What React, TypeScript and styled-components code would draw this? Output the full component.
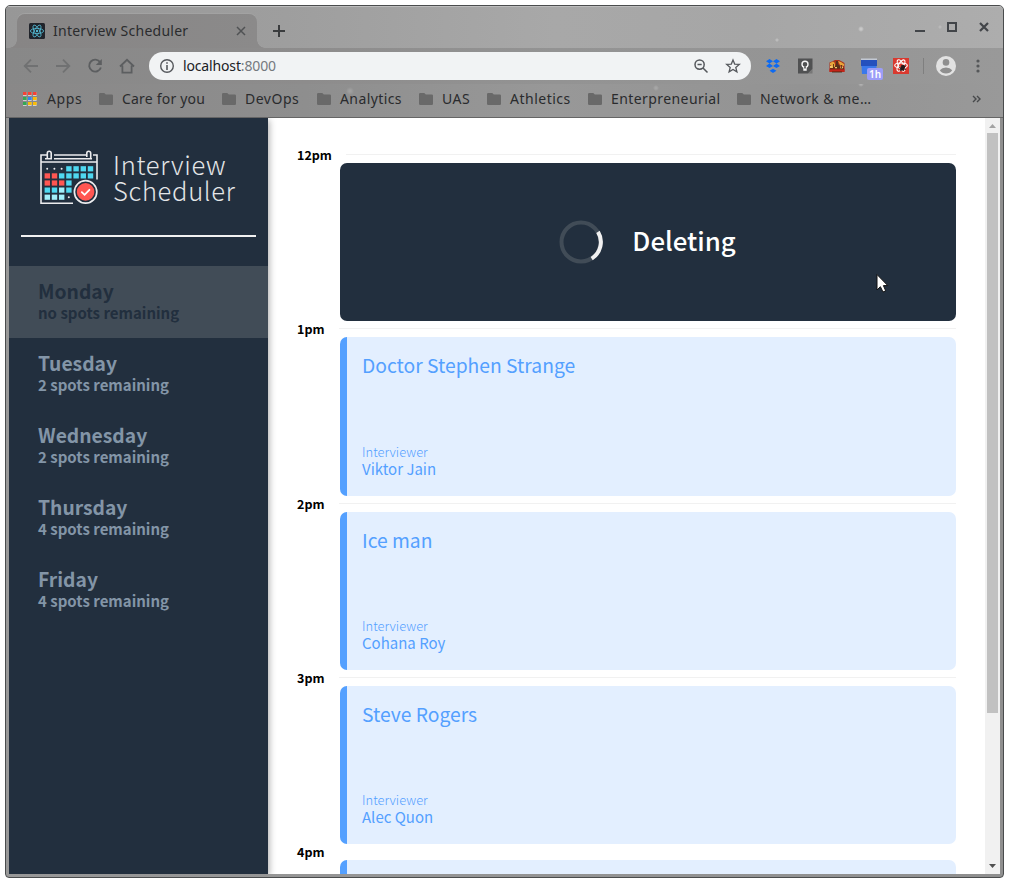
import React from "react";
import styled, { createGlobalStyle } from "styled-components";

const Global = createGlobalStyle`
  * { box-sizing: border-box; }
  html, body { margin: 0; background: #fff; overflow: hidden; }
  h1, h2, h3, p, ul { margin: 0; padding: 0; list-style: none; font-weight: inherit; }
  svg { display: block; flex: none; }
`;

const ui = `"Noto Sans", "Open Sans", sans-serif`;
const site = `"Noto Sans CJK SC", "Noto Sans", sans-serif`;

const Desktop = styled.div`
  width: 1013px;
  height: 887px;
  padding: 5px 0 0 5px;
  background: #fff;
`;

const Window = styled.div`
  position: relative;
  display: flex;
  flex-direction: column;
  width: 999px;
  height: 873px;
  padding: 0 3px 3px;
  border: 1px solid #4a4c4d;
  border-radius: 5px 5px 4px 4px;
  background: linear-gradient(90deg, #989898, #8f8f8f);
  overflow: hidden;
`;

const TabStrip = styled.header`
  display: flex;
  align-items: flex-end;
  flex: none;
  height: 42px;
  margin: 0 -3px;
  padding: 0 0 0 11px;
  border-top: 1px solid #bdbdbd;
  background:
    radial-gradient(circle at 855px 22px, #c8c8c8 0 1px, transparent 3px),
    radial-gradient(circle at 771px 33px, #bcbcbc 0 1px, transparent 2px),
    radial-gradient(circle at 934px 20px, #b9b9b9 0 1px, transparent 2px),
    linear-gradient(90deg, #979797 0, #9e9e9e 28%, #a8a8a8 55%, #a6a6a6 75%, #adadad 100%);
`;

const Tab = styled.div`
  position: relative;
  display: flex;
  align-items: center;
  width: 240px;
  height: 34px;
  padding: 0 10px 0 12px;
  border-radius: 8px 8px 0 0;
  background: linear-gradient(90deg, #878585, #8b8a8a);
  box-shadow: 0 -1px 0 #a2a2a2;
  &::before, &::after {
    content: "";
    position: absolute;
    bottom: 0;
    width: 8px;
    height: 8px;
  }
  &::before { left: -8px; background: radial-gradient(circle at 0 0, transparent 7.5px, #878585 8px); }
  &::after { right: -8px; background: radial-gradient(circle at 100% 0, transparent 7.5px, #8b8a8a 8px); }
`;

const TabTitle = styled.span`
  flex: 1;
  margin-left: 8px;
  font: 14px/20px ${ui};
  letter-spacing: 0.25px;
  color: #2b2c2e;
  white-space: nowrap;
`;

const NewTab = styled.div`
  width: 12px;
  margin: 0 0 11px 16px;
`;

const WindowButtons = styled.div`
  display: flex;
  gap: 20px;
  margin: 0 13px 15px auto;
`;

const Toolbar = styled.div`
  display: flex;
  align-items: center;
  flex: none;
  height: 36px;
  margin: 0 -3px;
  padding-left: 17px;
  background: linear-gradient(90deg, #888 0, #8d8c8c 30%, #939393 55%, #959595 80%, #999 100%);
`;

const NavIcons = styled.div`
  display: flex;
  align-items: center;
  gap: 16px;
  width: 126px;
`;

const AddressBar = styled.div`
  display: flex;
  align-items: center;
  width: 602px;
  height: 28px;
  padding: 0 10px;
  border-radius: 14px;
  background: #f1f3f4;
`;

const Url = styled.span`
  flex: 1;
  margin-left: 8px;
  font: 14px/20px ${ui};
  letter-spacing: -0.15px;
  color: #202124;
`;

const Port = styled.span`
  color: #75797e;
`;

const AddressActions = styled.div`
  display: flex;
  gap: 16px;
`;

const Extensions = styled.div`
  display: flex;
  align-items: center;
  gap: 16px;
  margin-left: 14px;
`;

const CalendarExtension = styled.div`
  position: relative;
  width: 16px;
  height: 16px;
`;

const Badge = styled.span`
  position: absolute;
  left: 6px;
  top: 10px;
  width: 16px;
  height: 12px;
  border-radius: 2px;
  background: #9c9df8;
  color: #fff;
  font: 600 10px/12px "Noto Sans", sans-serif;
  text-align: center;
`;

const Divider = styled.span`
  width: 1px;
  height: 16px;
  margin-left: -2px;
  background: #7f7f7f;
`;

const Bookmarks = styled.nav`
  display: flex;
  align-items: center;
  flex: none;
  height: 34px;
  margin: 0 -3px;
  padding: 0 22px 4px 17px;
  border-bottom: 1px solid #656565;
  background:
    radial-gradient(circle at 344px 7px, #a0a0a0 0 1px, transparent 4px),
    radial-gradient(circle at 650px 4px, #a6a6a6 0 1px, transparent 3px),
    radial-gradient(circle at 855px 0, #b0b0b0 0 1px, transparent 3px),
    linear-gradient(90deg, #898888 0, #8e8e8e 30%, #989898 55%, #939393 80%, #999 100%);
`;

const Bookmark = styled.div<{ $width: number; $spacing?: number }>`
  display: flex;
  align-items: center;
  flex: none;
  gap: 9px;
  width: ${(p) => p.$width}px;
  font: 14px/20px ${ui};
  letter-spacing: ${(p) => p.$spacing ?? 0}px;
  color: #2a2b2d;
  white-space: nowrap;
`;

const AppsBookmark = styled(Bookmark)`
  gap: 10px;
`;

const Overflow = styled.div`
  margin-left: auto;
`;

const Page = styled.main`
  display: flex;
  flex: 1;
  min-height: 0;
  background: #fff;
`;

const Sidebar = styled.aside`
  position: relative;
  width: 259px;
  flex: none;
  background: #222f3e;
  box-shadow: 1px 2px 7px rgba(0, 0, 0, 0.35);
  clip-path: inset(0 -12px 0 0);
  font-family: ${site};
`;

const Brand = styled.div`
  display: flex;
  gap: 14px;
  height: 117px;
  padding: 32px 0 0 31px;
`;

const BrandName = styled.h1`
  padding-top: 1px;
  font-size: 25.5px;
  line-height: 26px;
  font-weight: 300;
  letter-spacing: 0.7px;
  color: #e4e6e8;
`;

const Rule = styled.div`
  height: 2px;
  margin: 0 12px 29px;
  background: #f1f1f1;
`;

const Day = styled.li<{ $selected?: boolean }>`
  height: 72px;
  padding: 15px 29px 0;
  background: ${(p) => (p.$selected ? "#414c57" : "transparent")};
  color: ${(p) => (p.$selected ? "#222f3e" : "#8395a7")};
  font-weight: 700;
`;

const DayName = styled.h2`
  font-size: 19.3px;
  line-height: 21px;
  font-weight: 700;
`;

const Spots = styled.p`
  margin-top: 1px;
  font-size: 15px;
  line-height: 20px;
`;

const Schedule = styled.section`
  flex: 1;
  padding: 29px 29px 0 29px;
  overflow: hidden;
  font-family: ${site};
`;

const Hour = styled.header`
  display: flex;
  justify-content: space-between;
  height: 16px;
`;

const Time = styled.h3`
  font-size: 12.5px;
  line-height: 15px;
  font-weight: 700;
  color: #000;
`;

const HourLine = styled.div<{ $width: number }>`
  width: ${(p) => p.$width}px;
  height: 1px;
  margin-top: 7px;
  background: #f1f1f1;
`;

const cardHeight = "158.333px";

const StatusCard = styled.article`
  display: flex;
  align-items: center;
  justify-content: center;
  gap: 29px;
  height: ${cardHeight};
  margin-left: 43px;
  border-radius: 7px;
  padding-right: 1px;
  background: #222f3e;
`;

const StatusText = styled.p`
  padding-bottom: 4px;
  font-size: 25.8px;
  line-height: 36px;
  font-weight: 500;
  color: #fff;
`;

const Appointment = styled.article`
  display: flex;
  flex-direction: column;
  justify-content: space-between;
  height: ${cardHeight};
  margin-left: 43px;
  padding: 14px 15px 19.1px;
  border-left: 7px solid #54a0ff;
  border-radius: 7px;
  background: #e3efff;
  color: #54a0ff;
`;

const Student = styled.h2`
  font-size: 19.3px;
  line-height: 28px;
`;

const Label = styled.h4`
  margin: 0;
  font-size: 12.9px;
  line-height: 16px;
  font-weight: 300;
`;

const Interviewer = styled.p`
  font-size: 15px;
  line-height: 17px;
`;

const Scrollbar = styled.div`
  display: flex;
  flex-direction: column;
  align-items: center;
  width: 15px;
  flex: none;
  padding: 6px 0 5px;
  background: #f1f1f1;
`;

const Thumb = styled.div`
  width: 11px;
  height: 580px;
  margin: 4px 0 auto;
  background: #c1c1c1;
`;

const Pointer = styled.div`
  position: absolute;
  left: 870px;
  top: 267px;
`;

const Folder = () => (
  <svg width="14" height="12" viewBox="0 0 14 12" fill="#696969">
    <path d="M1.3 0H5.3L6.8 1.6H12.8Q14 1.6 14 2.8V10.8Q14 12 12.8 12H1.2Q0 12 0 10.8V1.3Q0 0 1.3 0Z" />
  </svg>
);

const ReactIcon = () => (
  <svg width="16" height="16" viewBox="0 0 16 16">
    <rect width="16" height="16" rx="1.5" fill="#20232a" />
    <g fill="none" stroke="#53b7d0" strokeWidth="0.85">
      <ellipse cx="8" cy="8" rx="6.6" ry="2.6" />
      <ellipse cx="8" cy="8" rx="6.6" ry="2.6" transform="rotate(60 8 8)" />
      <ellipse cx="8" cy="8" rx="6.6" ry="2.6" transform="rotate(120 8 8)" />
    </g>
    <circle cx="8" cy="8" r="1.2" fill="#53b7d0" />
  </svg>
);

const AppsIcon = () => {
  const colors = ["#f44336", "#f44336", "#f44336", "#34a853", "#2f86f0", "#fbbc05", "#34a853", "#fbbc05", "#fbbc05"];
  return (
    <svg width="14" height="14" viewBox="0 0 14 14">
      {colors.map((c, i) => (
        <g key={i} transform={`translate(${(i % 3) * 5} ${Math.floor(i / 3) * 5})`}>
          <rect width="3.6" height="4" fill="#cfcfcf" />
          <rect width="3.6" height="3" fill={c} />
        </g>
      ))}
    </svg>
  );
};

const LogoCalendar = () => {
  const rows = ["...bbbb", "rrbbbbb", "rrrb", "bblb", "lll."];
  const fills: Record<string, string> = { b: "#4fd8f0", r: "#ff5652", l: "#a3effa" };
  return (
    <svg width="59" height="56" viewBox="0 0 59 56">
      <g fill="none" stroke="#ececee" strokeWidth="1.6">
        <path d="M57 29.5V5H53M46 5H14M7 5H1V53.3H33M1 12H57M5 8.7H12M14 8.7H52" />
        <path d="M7.3 8V3.2Q7.3 1.2 9.2 1.2T11.2 3.2V8" />
        <path d="M46.8 7V3.2Q46.8 1.2 48.7 1.2T50.7 3.2V8" />
      </g>
      {rows.flatMap((row, y) =>
        [...row].map((cell, x) =>
          cell === "." ? (
            <circle key={`${x}${y}`} cx={7.2 + x * 7.2} cy={18.8 + y * 7.1} r="1" fill="#ececee" />
          ) : (
            <rect key={`${x}${y}`} x={4.6 + x * 7.2} y={16.2 + y * 7.1} width="5.4" height="5.2" fill={fills[cell]} />
          )
        )
      )}
      <circle cx="45.6" cy="41.9" r="12.8" fill="#222f3e" />
      <circle cx="45.6" cy="41.9" r="11.2" fill="#222f3e" stroke="#ececee" strokeWidth="1.7" />
      <circle cx="45.6" cy="41.9" r="8.8" fill="#ff5652" />
      <path d="M41.8 42.2L44.6 44.8L49.4 39.8" fill="none" stroke="#fff" strokeWidth="1.8" strokeLinecap="round" />
    </svg>
  );
};

const Spinner = () => (
  <svg width="44" height="44" viewBox="0 0 44 44" fill="none" strokeWidth="4">
    <circle cx="22" cy="22" r="19.5" stroke="#414c57" />
    <path d="M39 11.9A19.5 19.5 0 0 1 32.7 38.6" stroke="#f1f1f1" />
  </svg>
);

const NavButtons = () => (
  <NavIcons>
    <svg width="16" height="16" viewBox="0 0 16 16" fill="none" stroke="#707172" strokeWidth="1.8">
      <path d="M15 8H2M8 1.7L1.7 8L8 14.3" />
    </svg>
    <svg width="16" height="16" viewBox="0 0 16 16" fill="none" stroke="#707172" strokeWidth="1.8">
      <path d="M1 8H14M8 1.7L14.3 8L8 14.3" />
    </svg>
    <svg width="16" height="16" viewBox="0 0 16 16" fill="none" stroke="#5c5e60" strokeWidth="1.9">
      <path d="M13.2 4.3A6 6 0 1 0 13.9 9.5" />
      <path d="M14.8 1V7H8.8Z" fill="#5c5e60" stroke="none" />
    </svg>
    <svg width="16" height="16" viewBox="0 0 16 16" fill="none" stroke="#5c5e60" strokeWidth="1.8">
      <path d="M1 8.5L8 1.8L15 8.5M3.4 7.5V14.6H12.6V7.5" />
    </svg>
  </NavIcons>
);

const ExtensionIcons = () => (
  <Extensions>
    <svg width="16" height="16" viewBox="0 0 16 16" fill="#0d6af2">
      <path d="M4.5 1L8 3.2L4.5 5.5L1 3.2ZM11.5 1L15 3.2L11.5 5.5L8 3.2ZM4.5 5.6L8 7.9L4.5 10.1L1 7.9ZM11.5 5.6L15 7.9L11.5 10.1L8 7.9ZM8 10.7L11.4 12.8L8 15L4.6 12.8Z" />
    </svg>
    <svg width="16" height="16" viewBox="0 0 16 16">
      <path d="M1 .5H15.5V11L11 15.5H1Z" fill="#505152" />
      <path d="M15.5 11V15.5H11Z" fill="#777" />
      <circle cx="8" cy="6.3" r="3" fill="none" stroke="#f5f5f5" strokeWidth="1.4" />
      <path d="M6.3 9H9.7V12.8H6.3Z" fill="#f5f5f5" />
      <path d="M7.2 8.3H8.8V10.5H7.2Z" fill="#505152" />
    </svg>
    <svg width="16" height="16" viewBox="0 0 16 16">
      <path d="M.5 4.5L3 3.5L6 2L10 2L13 3.5L15.5 5V14H.5Z" fill="#a8301a" />
      <path d="M1 5L4 3.5L6 5L5 7H1ZM9 3L12 4L15 6V8L11 7ZM3 7L6 6V9L3 10Z" fill="#e8a63a" />
      <path d="M7 3H9V6L11 8V10H5L7 7Z" fill="#57301a" />
      <path d="M1 8L3 7L4 10H1ZM12 7L14 9V11H11ZM6 9H8V11H6Z" fill="#f3c46a" />
      <path d="M.5 10.8H15.5V13.8H.5Z" fill="#c4241a" />
      <path d="M1 10.8H15M3 14H13M4.5 6V10M12.5 7V10" stroke="#42230e" strokeWidth=".8" />
    </svg>
    <CalendarExtension>
      <svg width="16" height="16" viewBox="0 0 16 16">
        <path d="M0 .5H16V3H0Z" fill="#c3c9d4" />
        <path d="M0 2H16V8H0Z" fill="#2450bd" />
        <path d="M.5 8H15.5V16H1Z" fill="#3a78ea" />
      </svg>
      <Badge>1h</Badge>
    </CalendarExtension>
    <svg width="16" height="16" viewBox="0 0 16 16">
      <rect width="16" height="16" fill="#d9392f" />
      <g fill="none" stroke="#fff" strokeWidth="1.1">
        <ellipse cx="8" cy="7.5" rx="6.3" ry="2.5" />
        <ellipse cx="8" cy="7.5" rx="6.3" ry="2.5" transform="rotate(60 8 7.5)" />
        <ellipse cx="8" cy="7.5" rx="6.3" ry="2.5" transform="rotate(120 8 7.5)" />
      </g>
      <ellipse cx="9.6" cy="9.8" rx="2" ry="3.2" transform="rotate(35 9.6 9.8)" fill="#25191a" />
      <path d="M6 9.5L13 11.5M7 12.8L12.6 8.2M8.6 7L10.8 13" stroke="#25191a" strokeWidth=".9" />
    </svg>
    <Divider />
    <svg width="20" height="20" viewBox="0 0 20 20" style={{ marginLeft: -4 }}>
      <circle cx="10" cy="10" r="10" fill="#e2e2e2" />
      <circle cx="10" cy="6.4" r="3.3" fill="#8f8f8f" />
      <path d="M3.8 14.2Q6 11.6 10 11.6T16.2 14.2Q14 17.4 10 17.4T3.8 14.2Z" fill="#8f8f8f" />
    </svg>
    <svg width="4" height="16" viewBox="0 0 4 16" fill="#555759" style={{ marginLeft: 4 }}>
      <circle cx="2" cy="3" r="1.6" />
      <circle cx="2" cy="8" r="1.6" />
      <circle cx="2" cy="13" r="1.6" />
    </svg>
  </Extensions>
);

const bookmarks = [
  { name: "Care for you", width: 123, spacing: 0.2 },
  { name: "DevOps", width: 95, spacing: 0.5 },
  { name: "Analytics", width: 102, spacing: 0.4 },
  { name: "UAS", width: 68, spacing: 0.5 },
  { name: "Athletics", width: 101, spacing: 0.5 },
  { name: "Enterpreneurial", width: 149, spacing: 0.42 },
  { name: "Network & me…", width: 140, spacing: 0.42 },
];

const days = [
  { name: "Monday", spots: "no spots remaining", selected: true },
  { name: "Tuesday", spots: "2 spots remaining" },
  { name: "Wednesday", spots: "2 spots remaining" },
  { name: "Thursday", spots: "4 spots remaining" },
  { name: "Friday", spots: "4 spots remaining" },
];

const appointments = [
  { time: "1pm", student: "Doctor Stephen Strange", interviewer: "Viktor Jain", line: 617 },
  { time: "2pm", student: "Ice man", interviewer: "Cohana Roy", line: 617 },
  { time: "3pm", student: "Steve Rogers", interviewer: "Alec Quon", line: 617 },
  { time: "4pm", student: "", interviewer: "", line: 0 },
];

export default function App() {
  return (
    <Desktop>
      <Global />
      <Window>
        <TabStrip>
          <Tab>
            <ReactIcon />
            <TabTitle>Interview Scheduler</TabTitle>
            <svg width="12" height="12" viewBox="0 0 12 12" stroke="#505254" strokeWidth="1.5">
              <path d="M2 2L10 10M10 2L2 10" />
            </svg>
          </Tab>
          <NewTab>
            <svg width="12" height="12" viewBox="0 0 12 12" stroke="#3a3c3e" strokeWidth="2">
              <path d="M6 0V12M0 6H12" />
            </svg>
          </NewTab>
          <WindowButtons>
            <svg width="12" height="12" viewBox="0 0 12 12"><path d="M1 9H11V11H1Z" fill="#424549" /></svg>
            <svg width="12" height="12" viewBox="0 0 12 12"><path d="M2 2H10V10H2Z" fill="none" stroke="#424549" strokeWidth="2" /></svg>
            <svg width="12" height="12" viewBox="0 0 12 12"><path d="M2 2L10 10M10 2L2 10" stroke="#424549" strokeWidth="2.2" /></svg>
          </WindowButtons>
        </TabStrip>
        <Toolbar>
          <NavButtons />
          <AddressBar>
            <svg width="16" height="16" viewBox="0 0 16 16">
              <circle cx="8" cy="8" r="6.3" fill="none" stroke="#55585c" strokeWidth="1.4" />
              <path d="M7.2 7H8.8V12H7.2ZM7.2 4.3H8.8V5.8H7.2Z" fill="#55585c" />
            </svg>
            <Url>localhost<Port>:8000</Port></Url>
            <AddressActions>
              <svg width="16" height="16" viewBox="0 0 16 16" fill="none" stroke="#55585c" strokeWidth="1.5">
                <circle cx="6.6" cy="6.6" r="4.6" />
                <path d="M10 10L14.5 14.5M4.5 6.6H8.7" />
              </svg>
              <svg width="16" height="16" viewBox="0 0 16 16" fill="none" stroke="#55585c" strokeWidth="1.3">
                <path d="M8 1.9L9.7 6.1L14.3 6.4L10.8 9.4L11.9 13.8L8 11.4L4.1 13.8L5.2 9.4L1.7 6.4L6.3 6.1Z" />
              </svg>
            </AddressActions>
          </AddressBar>
          <ExtensionIcons />
        </Toolbar>
        <Bookmarks>
          <AppsBookmark $width={76} $spacing={0.6}><AppsIcon />Apps</AppsBookmark>
          {bookmarks.map((b) => (
            <Bookmark key={b.name} $width={b.width} $spacing={b.spacing}><Folder />{b.name}</Bookmark>
          ))}
          <Overflow>
            <svg width="9" height="8" viewBox="0 0 9 8" fill="none" stroke="#47494b" strokeWidth="1.4">
              <path d="M1 1L4 4L1 7M5 1L8 4L5 7" />
            </svg>
          </Overflow>
        </Bookmarks>
        <Page>
          <Sidebar>
            <Brand>
              <LogoCalendar />
              <BrandName>Interview<br />Scheduler</BrandName>
            </Brand>
            <Rule />
            <ul>
              {days.map((d) => (
                <Day key={d.name} $selected={d.selected}>
                  <DayName>{d.name}</DayName>
                  <Spots>{d.spots}</Spots>
                </Day>
              ))}
            </ul>
          </Sidebar>
          <Schedule>
            <Hour><Time>12pm</Time><HourLine $width={610} /></Hour>
            <StatusCard><Spinner /><StatusText>Deleting</StatusText></StatusCard>
            {appointments.map((a) => (
              <React.Fragment key={a.time}>
                <Hour><Time>{a.time}</Time><HourLine $width={a.line} /></Hour>
                <Appointment>
                  {a.student && (
                    <>
                      <Student>{a.student}</Student>
                      <div>
                        <Label>Interviewer</Label>
                        <Interviewer>{a.interviewer}</Interviewer>
                      </div>
                    </>
                  )}
                </Appointment>
              </React.Fragment>
            ))}
          </Schedule>
          <Scrollbar>
            <svg width="7" height="5" viewBox="0 0 7 5"><path d="M0 4H7L3.5 0Z" fill="#a3a3a3" /></svg>
            <Thumb />
            <svg width="7" height="5" viewBox="0 0 7 5"><path d="M0 0H7L3.5 4Z" fill="#505050" /></svg>
          </Scrollbar>
        </Page>
        <Pointer>
          <svg width="13" height="21" viewBox="0 0 13 21">
            <path d="M1 1.5V17L4.4 13.7L7 19L9.7 17.8L7.4 12.6H11.8Z" fill="#fff" stroke="#111" strokeWidth="1" />
          </svg>
        </Pointer>
      </Window>
    </Desktop>
  );
}
